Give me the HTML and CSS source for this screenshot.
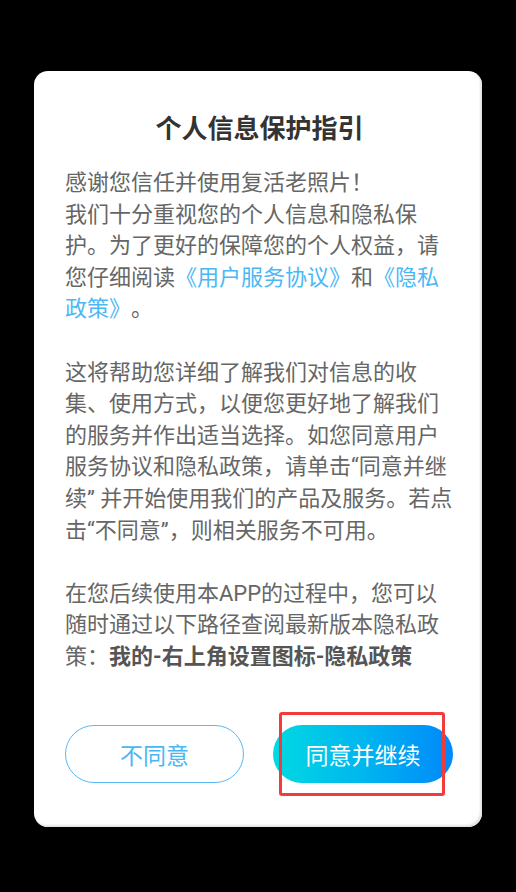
FILE: index.html
```html
<!DOCTYPE html>
<html lang="zh-CN">
<head>
<meta charset="utf-8">
<title>个人信息保护指引</title>
<link rel="stylesheet" href="styles.css">
</head>
<body>
<div class="screen">
  <div class="dialog">
    <h1 class="title">个人信息保护指引</h1>
    <div class="body">
      感谢您信任并使用复活老照片！<br>
      我们十分重视您的个人信息和隐私保护。为了更好的保障您的个人权益，请您仔细阅读<span class="link">《用户服务协议》</span>和<span class="link">《隐私政策》</span>。<br><br>
      这将帮助您详细了解我们对信息的收集、使用方式，以便您更好地了解我们的服务并作出适当选择。如您同意用户服务协议和隐私政策，请单击“同意并继续” 并开始使用我们的产品及服务。若点击“不同意”，则相关服务不可用。<br><br>
      在您后续使用本APP的过程中，您可以随时通过以下路径查阅最新版本隐私政策：<b class="strong">我的-右上角设置图标-隐私政策</b>
    </div>
    <div class="actions">
      <button class="btn btn-outline">不同意</button>
      <div class="primary-wrap">
        <button class="btn btn-primary">同意并继续</button>
        <span class="highlight"></span>
      </div>
    </div>
  </div>
</div>
</body>
</html>
```
FILE: styles.css
```css
html, body {
  margin: 0;
  padding: 0;
  background: #000;
}
body {
  font-family: "Noto Sans CJK SC", "Noto Sans", sans-serif;
  text-spacing-trim: space-all;
}
.screen {
  width: 516px;
  height: 892px;
  padding-top: 71px;
  box-sizing: border-box;
}
.dialog {
  margin-left: 34px;
  width: 448px;
  height: 756px;
  box-sizing: border-box;
  background: #fff;
  border-radius: 14px;
  box-shadow: inset -2px -2px 2px #e4e4e4;
  padding: 37px 28px 0 31px;
}
.title {
  margin: 0;
  font-size: 26px;
  line-height: 38px;
  font-weight: 700;
  color: #333;
  text-align: center;
}
.body {
  margin-top: 21px;
  font-family: Roboto, "Noto Sans CJK SC", sans-serif;
  font-size: 22px;
  line-height: 31.6px;
  color: #666;
  letter-spacing: 0;
  text-spacing-trim: space-all;
}
.link {
  color: #4bb8f5;
}
.strong {
  font-weight: 700;
  color: #555;
}
.actions {
  margin-top: 52px;
  display: flex;
  justify-content: space-between;
  align-items: center;
  padding-right: 1px;
}
.btn {
  width: 180px;
  height: 58px;
  border-radius: 29px;
  font-family: inherit;
  font-size: 23px;
  padding: 0;
  cursor: pointer;
}
.btn-outline {
  background: #fff;
  border: 1.5px solid #56baf6;
  color: #4ab7f5;
  width: 179px;
}
.primary-wrap {
  position: relative;
  width: 180px;
  height: 58px;
}
.btn-primary {
  border: none;
  color: #fff;
  background: linear-gradient(90deg, #00d9e2 0%, #00b6ef 50%, #0088fa 100%);
}
.highlight {
  position: absolute;
  left: 6px;
  top: -13px;
  width: 160px;
  height: 78px;
  border: 3px solid #f23b3b;
  border-radius: 3px;
}
```
